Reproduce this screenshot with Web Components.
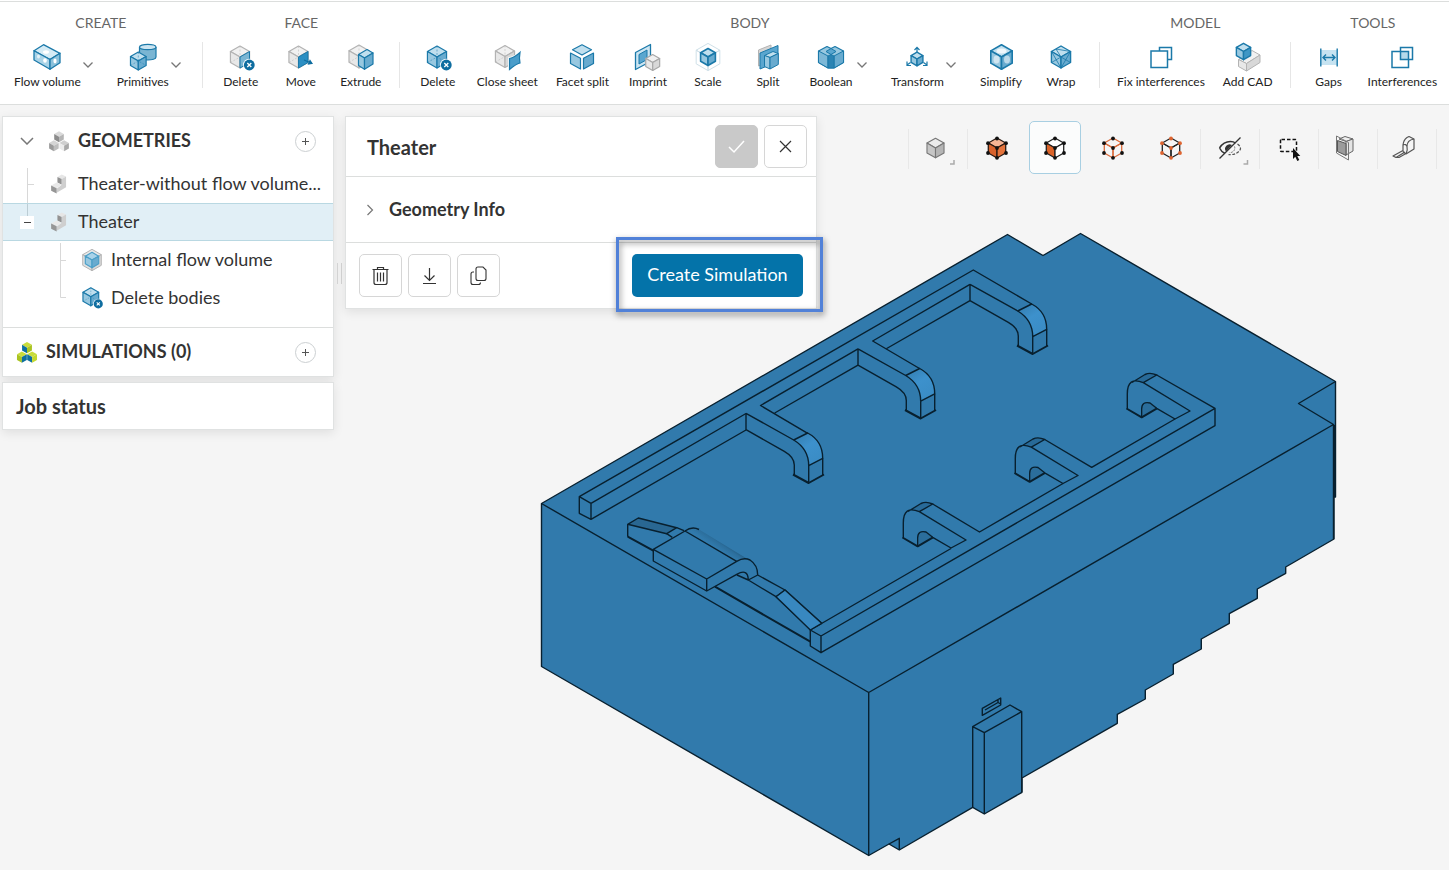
<!DOCTYPE html>
<html lang="en">
<head>
<meta charset="utf-8">
<meta name="viewport" content="width=device-width, initial-scale=1">
<title>CAD mode - Theater</title>
<style>
  html, body { margin: 0; height: 100%; }
  body { font-family: Lato, "Liberation Sans", sans-serif; color: #333; background: #f5f5f5; overflow: hidden; }
</style>
</head>
<body>
<cad-app></cad-app>

<template id="t-app">
  <style>
    :host { display: flex; flex-direction: column; min-height: 100vh; }
    main { flex: 1; position: relative; display: flex; }
    model-view { position: absolute; inset: 0; }
    .overlay { position: relative; flex: 1; display: flex; align-items: flex-start; padding: 11px 12px 0 2px; min-width: 0; }
    side-bar { flex: none; width: 332px; }
    .handle { flex: none; width: 5px; height: 21px; margin: 147px 3px 0; border: solid #d4d4d4; border-width: 0 1px; box-sizing: border-box; }
    settings-panel { flex: none; width: 472px; }
    view-tools { margin: 5px 0 0 auto; flex: none; }
  </style>
  <cad-toolbar>
    <tool-group label="CREATE">
      <tool-item icon="flow" label="Flow volume" menu></tool-item>
      <tool-item icon="primitives" label="Primitives" menu></tool-item>
    </tool-group>
    <tool-group label="FACE">
      <tool-item icon="faceDelete" label="Delete"></tool-item>
      <tool-item icon="faceMove" label="Move"></tool-item>
      <tool-item icon="extrude" label="Extrude"></tool-item>
    </tool-group>
    <tool-group label="BODY">
      <tool-item icon="bodyDelete" label="Delete"></tool-item>
      <tool-item icon="closeSheet" label="Close sheet"></tool-item>
      <tool-item icon="facet" label="Facet split"></tool-item>
      <tool-item icon="imprint" label="Imprint"></tool-item>
      <tool-item icon="scale" label="Scale"></tool-item>
      <tool-item icon="split" label="Split"></tool-item>
      <tool-item icon="boolean" label="Boolean" menu></tool-item>
      <tool-item icon="transform" label="Transform" menu></tool-item>
      <tool-item icon="simplify" label="Simplify"></tool-item>
      <tool-item icon="wrap" label="Wrap"></tool-item>
    </tool-group>
    <tool-group label="MODEL">
      <tool-item icon="fixInterf" label="Fix interferences"></tool-item>
      <tool-item icon="addCad" label="Add CAD"></tool-item>
    </tool-group>
    <tool-group label="TOOLS">
      <tool-item icon="gaps" label="Gaps"></tool-item>
      <tool-item icon="interf" label="Interferences"></tool-item>
    </tool-group>
  </cad-toolbar>
  <main>
    <model-view></model-view>
    <div class="overlay">
      <side-bar></side-bar>
      <div class="handle"></div>
      <settings-panel heading="Theater"></settings-panel>
      <view-tools></view-tools>
    </div>
  </main>
</template>

<template id="t-toolbar">
  <style>
    :host { display: flex; flex: none; box-sizing: border-box; height: 105px; padding-left: 1px; background: #fff; border-bottom: 1px solid #dcdedd; overflow: hidden; position: relative; }
    :host::before { content: ""; position: absolute; left: 0; right: 0; top: 1px; height: 1px; background: #dcdedd; }
    ::slotted(tool-group:first-child) { padding-left: 4px; padding-right: 6px; }
    ::slotted(tool-group:last-child) { --rule: transparent; }
  </style>
  <slot></slot>
</template>

<template id="t-group">
  <style>
    :host { display: flex; flex-direction: column; flex: none; gap: 13px; padding: 14px 8px 0; position: relative; }
    :host::after { content: ""; position: absolute; right: 0; top: 42px; height: 46px; width: 1px; background: var(--rule, #e6e6e6); }
    h2 { margin: 0; font-size: 14px; line-height: 17px; font-weight: 400; text-align: center; color: #666; }
    .items { display: flex; margin-right: 1px; }
  </style>
  <h2></h2>
  <div class="items"><slot></slot></div>
</template>

<template id="t-item">
  <style>
    :host { display: flex; flex: none; }
    button { font: inherit; border: 0; background: none; padding: 0; margin: 0; color: #222; cursor: pointer; }
    .main { box-sizing: border-box; min-width: 60px; padding: 0 9px; display: flex; flex-direction: column; align-items: center; gap: 2px; font-size: 12px; line-height: 16px; white-space: nowrap; }
    .chev { display: none; width: 10px; margin: 0 15px 0 2px; height: 42px; color: #777; }
    :host([menu]) .main { padding-right: 0; min-width: 57px; }
    :host([menu]) .chev { display: block; }
    .chev svg { display: block; }
    cad-icon { width: 28px; height: 28px; }
  </style>
  <button class="main" type="button"><cad-icon></cad-icon><span></span></button>
  <button class="chev" type="button" aria-label="More options"><svg width="10" height="6" viewBox="0 0 10 6"><path d="M.5.5 5 5 9.500.5" fill="none" stroke="currentColor" stroke-width="1.3"/></svg></button>
</template>

<template id="t-side">
  <style>
    :host { display: flex; flex-direction: column; gap: 5px; font-size: 18px; line-height: 24px; }
    section { background: #fff; border: 1px solid #e0e2e2; box-shadow: 0 3px 10px rgba(0,0,0,.09); box-sizing: border-box; }
    button { font: inherit; color: #555; cursor: pointer; padding: 0; }
    h2 { margin: 0; font-size: 18px; font-weight: 700; flex: 1; }
    .head h2, .row span { padding-bottom: 2px; }
    .head { display: flex; align-items: center; height: 48px; padding: 0 17px; gap: 8px; box-sizing: border-box; }
    .toggle { width: 14px; height: 14px; border: 0; background: none; margin-right: 6px; display: flex; align-items: center; color: #777; }
    .add { width: 21px; height: 21px; box-sizing: border-box; border: 1px solid #ccd0d2; border-radius: 50%; background: #fff; display: grid; place-items: center; }
    .head cad-icon, .row cad-icon { width: 22px; height: 22px; flex: none; }
    .sims { border-top: 1px solid #dcdedd; height: 49px; padding-left: 13px; gap: 8px; }
    ul { list-style: none; margin: 0; padding: 0; }
    .tree { padding-bottom: 10px; }
    .row { display: flex; align-items: center; height: 38px; box-sizing: border-box; padding: 0 17px; gap: 8px; white-space: nowrap; }
    .row svg { flex: none; margin-right: 6px; display: block; }
    .sub .row { padding-left: 50px; }
    .row.on { background: #e1eff6; border: solid #b9d8e2; border-width: 1px 0; }
    .job { height: 48px; display: flex; align-items: center; padding-left: 13px; }
    .job h2 { font-size: 20px; }
    .expander { position: relative; border: 0; background: none; width: 14px; height: 36px; margin-right: 6px; }
    .expander svg { margin: 0; }
  </style>
  <section>
    <div class="head">
      <button class="toggle" type="button" aria-label="Collapse geometries"><svg width="14" height="8" viewBox="0 0 14 8"><path d="M1 1l6 6 6-6" fill="none" stroke="currentColor" stroke-width="1.500"/></svg></button>
      <cad-icon name="cubesGrey"></cad-icon>
      <h2>GEOMETRIES</h2>
      <button class="add" type="button" aria-label="Add geometry"><svg width="7" height="7" viewBox="0 0 7 7"><path d="M3.500 0v7M0 3.500h7" stroke="currentColor" stroke-width="1"/></svg></button>
    </div>
    <ul class="tree">
      <li class="row"><svg width="14" height="38"><path d="M7.500 3v35M8 19.500h6" stroke="#d8d8d8" fill="none"/></svg><cad-icon name="part"></cad-icon><span>Theater-without flow volume...</span></li>
      <li>
        <div class="row on"><button class="expander" type="button" aria-label="Collapse Theater"><svg width="14" height="36"><path d="M7.500 0v12" stroke="#bccdd4"/><rect x="0" y="12" width="14" height="13" fill="#fff"/><path d="M4 18.500h7" stroke="#444"/></svg></button><cad-icon name="part"></cad-icon><span>Theater</span></div>
        <ul class="sub">
          <li class="row"><svg width="14" height="38"><path d="M7.500 2v36M8 19.500h5" stroke="#d8d8d8" fill="none"/></svg><cad-icon name="innerFlow"></cad-icon><span>Internal flow volume</span></li>
          <li class="row"><svg width="14" height="38"><path d="M7.500 0v18.500H13" stroke="#d8d8d8" fill="none"/></svg><cad-icon name="bodiesDelete"></cad-icon><span>Delete bodies</span></li>
        </ul>
      </li>
    </ul>
    <div class="head sims">
      <cad-icon name="cubesColor"></cad-icon>
      <h2>SIMULATIONS (0)</h2>
      <button class="add" type="button" aria-label="Add simulation"><svg width="7" height="7" viewBox="0 0 7 7"><path d="M3.500 0v7M0 3.500h7" stroke="currentColor" stroke-width="1"/></svg></button>
    </div>
  </section>
  <section class="job"><h2>Job status</h2></section>
</template>

<template id="t-panel">
  <style>
    :host { display: block; box-sizing: border-box; background: #fff; border: 1px solid #e0e2e2; box-shadow: 0 3px 10px rgba(0,0,0,.09); }
    header, .info, footer { display: flex; align-items: center; box-sizing: border-box; }
    header { height: 60px; padding: 0 9px 0 21px; gap: 6px; border-bottom: 1px solid #dcdedd; }
    h1 { margin: 0; flex: 1; font-size: 20px; line-height: 24px; font-weight: 700; }
    button { font: inherit; cursor: pointer; }
    .sq { width: 43px; height: 43px; padding: 0; display: grid; place-items: center; background: #fff; border: 1px solid #d6d6d6; border-radius: 5px; color: #333; }
    .sq:disabled { background: #c9c9c9; border-color: #c9c9c9; color: #fff; }
    .info { width: 100%; height: 66px; padding: 0 20px; gap: 15px; border: 0; border-bottom: 1px solid #dcdedd; background: none; font-size: 18px; line-height: 24px; font-weight: 700; color: #333; text-align: left; }
    .info span { padding-bottom: 2px; }
    footer { height: 65px; padding: 0 13px; gap: 6px; }
    .cta { position: relative; margin-left: auto; }
    .cta button { height: 43px; width: 171px; padding: 0 0 3px; border: 0; border-radius: 5px; background: #0473a9; color: #fff; font-size: 18px; line-height: 24px; display: block; white-space: nowrap; }
    .cta::after { content: ""; position: absolute; inset: -17px -20px -15px -16px; border: 3px solid #5181d8; filter: drop-shadow(1px 3px 3px rgba(0,0,0,.5)); pointer-events: none; }
  </style>
  <header>
    <h1></h1>
    <button class="sq" type="button" disabled aria-label="Apply"><svg width="17" height="14" viewBox="0 0 17 14"><path d="M1 7l5 5L16 1" fill="none" stroke="currentColor" stroke-width="1.500"/></svg></button>
    <button class="sq" type="button" aria-label="Close"><svg width="13" height="13" viewBox="0 0 13 13"><path d="M1 1l11 11M12 1l-11 11" fill="none" stroke="currentColor" stroke-width="1.200"/></svg></button>
  </header>
  <button class="info" type="button" aria-expanded="false"><svg width="8" height="12" viewBox="0 0 8 12"><path d="M1.500 1l5 5-5 5" fill="none" stroke="#777" stroke-width="1.200"/></svg><span>Geometry Info</span></button>
  <footer>
    <button class="sq" type="button" aria-label="Delete"><svg width="17" height="20" viewBox="0 0 17 20" fill="none" stroke="currentColor" stroke-width="1.200"><path d="M.5 3.500h16M5.500 3.500V1.500h6v2M2 3.500V16.500q0 2 2 2h9q2 0 2-2V3.500M5.500 6.500v9M8.500 6.500v9M11.500 6.500v9"/></svg></button>
    <button class="sq" type="button" aria-label="Download"><svg width="15" height="18" viewBox="0 0 15 18" fill="none" stroke="currentColor" stroke-width="1.200"><path d="M7.500 1v12M2.500 8.500l5 5 5-5M1 16.500h13"/></svg></button>
    <button class="sq" type="button" aria-label="Duplicate"><svg width="17" height="20" viewBox="0 0 17 20" fill="none" stroke="currentColor" stroke-width="1.100"><path d="M6 3q0-2 2-2h5l3 3v8.500q0 2-2 2H8q-2 0-2-2zM4 6H3q-2 0-2 2v8.500q0 2 2 2h5.500q2 0 2-2"/></svg></button>
    <div class="cta"><button type="button">Create Simulation</button></div>
  </footer>
</template>

<template id="t-view">
  <style>
    :host { display: flex; }
    .g { display: flex; gap: 6px; padding: 0 3px; position: relative; border-right: 1px solid transparent; }
    .g::after, .g:first-of-type::before { content: ""; position: absolute; top: 8px; height: 40px; width: 1px; background: #e8e8e8; }
    .g::after { right: -1px; }
    .g:first-of-type { border-left: 1px solid transparent; }
    .g:first-of-type::before { left: -1px; }
    button { box-sizing: border-box; width: 52px; height: 53px; padding: 0; border: 1px solid transparent; border-radius: 5px; background: none; cursor: pointer; display: grid; place-items: center; }
    button[aria-pressed=true] { background: #fbfcfc; border-color: #a8cfe2; }
    cad-icon { width: 40px; height: 40px; }
  </style>
  <div class="g"><button type="button" aria-label="Render mode"><cad-icon name="vCube" box="40"></cad-icon></button></div>
  <div class="g">
    <button type="button" aria-label="Pick volumes"><cad-icon name="vVolume" box="40"></cad-icon></button>
    <button type="button" aria-label="Pick faces" aria-pressed="true"><cad-icon name="vFace" box="40"></cad-icon></button>
    <button type="button" aria-label="Pick edges"><cad-icon name="vEdge" box="40"></cad-icon></button>
    <button type="button" aria-label="Pick vertices"><cad-icon name="vNode" box="40"></cad-icon></button>
  </div>
  <div class="g"><button type="button" aria-label="Visibility"><cad-icon name="vHide" box="40"></cad-icon></button></div>
  <div class="g"><button type="button" aria-label="Box selection"><cad-icon name="vSelect" box="40"></cad-icon></button></div>
  <div class="g"><button type="button" aria-label="Clip"><cad-icon name="vClip" box="40"></cad-icon></button></div>
  <div class="g"><button type="button" aria-label="Measure"><cad-icon name="vTape" box="40"></cad-icon></button></div>
</template>

<template id="t-model">
  <style>
    :host { display: block; overflow: hidden; }
    svg { display: block; width: 100%; height: 100%; }
  </style>
  <svg viewBox="0 105 1449 765" fill="none" stroke="#08202f" stroke-width="1.400" stroke-linejoin="round" role="img" aria-label="Theater model">
    <defs>
      <linearGradient id="bend" x1="0" y1="0" x2=".6" y2="1"><stop offset="0" stop-color="#327bad"/><stop offset=".5" stop-color="#3d91cc"/><stop offset="1" stop-color="#3a8cc5"/></linearGradient>
      <linearGradient id="roll" gradientUnits="userSpaceOnUse" x1="718" y1="549" x2="724" y2="540"><stop offset="0" stop-color="#317aac"/><stop offset=".5" stop-color="#2c6f9d"/><stop offset="1" stop-color="#1f5274"/></linearGradient>
      <g id="drop">
        <path d="M1017.700 311 1031.700 304Q1046.700 312 1046.700 329.300L1032.700 336.700Q1032.700 320 1017.700 311Z" fill="url(#bend)"/>
        <path d="M970 284.300V300.700L1008.300 322.300Q1018.300 328 1018.300 336V346M970 284.300 1017.700 311M1032.700 336.700V354M1046.700 329.300V346"/>
        <path d="M1017 345.500 1032.700 354 1048 345.500" stroke-width="2"/>
      </g>
      <g id="hook">
        <path d="M1135 381 1148 373.500Q1152 373 1156.700 375L1143.300 382.700Z" fill="#286a98" stroke="none"/>
        <path d="M1143 407Q1143.500 402 1149 403L1156 408 1143 416Z" fill="#2b6e9c" stroke="none"/>
        <path d="M1127.300 409V394Q1127.300 376 1143.300 382.700L1190 411 1175 419 1156.700 408.300 1150 403Q1141.700 401 1141.700 409V417.300M1132 382.500 1145 374.500Q1150 372 1156.700 375L1143.300 382.700"/>
        <path d="M1126.500 408.500 1141.700 417.300 1157 408.300" stroke-width="2"/>
      </g>
    </defs>
    <path fill="#317aac" d="M541.500 503.500 1007.500 234.500 1043 255.500 1080.500 233.500 1335.500 381.500V497H1334V539L1285.700 567V573.300L1257.300 589V598.300L1229.300 613.700V623.300L1201.300 639V649L1173.300 664.300V674L1145.300 690V699L1117.300 714.300V723.300L1022 778V792.300L984.300 814 972.700 807.300 899.300 850 889 844 868.700 855.500 541.500 666.500Z"/>
    <path d="M541.500 503.500 868.700 692.500 1333.500 424.500 1298.500 403.500 1335.500 381.500M868.700 692.500V855.500M1333.500 424V539M889 844 899.300 838.300V850"/>
    <path d="M1334.800 425V497" stroke-width="2.400"/>
    <path d="M972.700 808V726.700L1010 705 1021.700 711.700V792M972.700 726.700 984.300 732.700 1021.700 711.700M984.300 732.700V814"/>
    <path d="M982.300 715.300V708.300L1000.700 698V705ZM985 710 998 702.500 1000.700 704M998 702.500V699.500"/>
    <path d="M591 519.300 579.300 513.300V496.700L973.300 270 1031.700 304M579.300 496.700 591 503.300V519.300L746 430M591 503.300 746 413.500"/>
    <path d="M970 284.300 872.700 341 919.500 368.500M970 300.700 886.700 348.500M858 348.800 760.500 405.500 807.700 433.300M858 365.200 774.700 413"/>
    <use href="#drop"/><use href="#drop" x="-112" y="64.500"/><use href="#drop" x="-224" y="129"/>
    <use href="#hook"/><use href="#hook" x="-112" y="64.500"/><use href="#hook" x="-224" y="129"/>
    <path d="M1156.700 375 1215 408.300V425.700L821 652.700 810.300 646V630L951 548.500M1215 408.300 821 636V652.700M821 636 810.300 630M1175 419 1091.700 467.300 1044.700 439.500M1063 483.500 979.500 532 932.700 504"/>
    <path d="M627.700 524.300 638.300 518 676.700 527.700 666.700 533.700Z" fill="#296792"/>
    <path d="M666.700 533.700 672.300 537.300M676.700 527.700 684 530.700M627.700 524.300V536.700"/>
    <path d="M627.700 536.700 653.300 550.700M715 586.700 810.300 641.700" stroke-width="2"/>
    <path d="M685 531Q692 526 699 529.500L746.700 558.500Q741 558 736.700 561.300Z" fill="url(#roll)" stroke="none"/>
    <path d="M653.300 549.300 685 531 736.700 561.300 706.700 579ZM653.300 549.300V561L706.700 591V579M685 531Q692 526 699 529.500M736.700 561.300Q744 557 750 560 757.700 565 757.700 575L785 590 821.700 623.300M706.700 591 736.700 574.300Q748 568 748.300 580L776 596.700 810.300 629M748.300 580 757.700 575M776 596.700 785 590M737 575 748.300 580"/>
    <path d="M776 596.700 785 590 821.700 623.300 810.300 630Z" fill="#3888c0"/>
  </svg>
</template>

<script>
const BLUE = { t: '#c0dfee', l: '#98c8e0', r: '#69abcf', s: '#1b79a9' };
const GREY = { t: '#f1f1f1', l: '#e8e8e8', r: '#d8d8d8', s: '#b3b3b3' };

const poly = (pts, fill, stroke = 'none', w = 1) =>
  `<polygon points="${pts}" fill="${fill}" stroke="${stroke}" stroke-width="${w}" stroke-linejoin="round"/>`;

/* Isometric cube around (cx, cy) with corner radius r. */
function cube(cx, cy, r, c, w = 1.2) {
  const x = r * 0.87, h = r / 2;
  return poly([cx, cy - r, cx + x, cy - h, cx, cy, cx - x, cy - h], c.t, c.s, w)
    + poly([cx - x, cy - h, cx, cy, cx, cy + r, cx - x, cy + h], c.l, c.s, w)
    + poly([cx + x, cy - h, cx, cy, cx, cy + r, cx + x, cy + h], c.r, c.s, w);
}
const hidden = (cx, cy, r, s) =>
  `<path d="M${cx} ${cy - r}V${cy}M${cx - r * .87} ${cy + r / 2}L${cx} ${cy}L${cx + r * .87} ${cy + r / 2}" fill="none" stroke="${s}" stroke-width=".7" stroke-dasharray="2 1.500" opacity=".7"/>`;
const cross = (x, y, r) => `<circle cx="${x}" cy="${y}" r="${r + .8}" fill="#fff"/><circle cx="${x}" cy="${y}" r="${r}" fill="#0e6da0"/><path d="M${x - 2} ${y - 2}l4 4m0-4l-4 4" stroke="#fff" stroke-width="1.300"/>`;
const badge = cross(22.3, 21, 5.4);
const solid = (a, b, c) => ({ t: a, l: b, r: c, s: 'none' });

function nodes(faces, edge, dot) {
  const p = [[20, 10.5], [29, 15.2], [29, 25], [20, 29.8], [11, 25], [11, 15.2], [20, 20]];
  return cube(20, 20, 10, { ...faces, s: edge }, 1.3)
    + p.map(([x, y]) => `<circle cx="${x}" cy="${y}" r="1.900" fill="${dot}"/>`).join('');
}

const ICONS = {
  flow: poly('1,6.700 10.500,.7 27,9.300 17,15.500', '#d5ebf5', BLUE.s, 1.3) + poly('1,6.700 17,15.500 17,25.300 1,16', '#a9d3e7', BLUE.s, 1.3) + poly('17,15.500 27,9.300 27,18.700 17,25.300', '#8bc1db', BLUE.s, 1.3)
    + '<ellipse cx="13" cy="8" rx="3" ry="1.800" fill="#fff"/><ellipse cx="12" cy="16.500" rx="1.800" ry="2.200" fill="#fff"/><ellipse cx="5.500" cy="12.500" rx="1.500" ry="2" fill="#fff" opacity=".7"/><ellipse cx="22" cy="17" rx="1.600" ry="2.400" fill="#fff"/>',
  primitives: '<path d="M10.500 3v10c0 4 16.500 4 16.500 0V3" fill="#7ab5d3" stroke="#1b79a9" stroke-width="1.200"/><ellipse cx="18.750" cy="3" rx="8.250" ry="2.600" fill="#cbe5f2" stroke="#1b79a9" stroke-width="1.200"/>' + cube(9.3, 17, 9, BLUE) + hidden(9.3, 17, 9, BLUE.s),
  faceDelete: cube(13, 13, 11, { ...GREY, r: '#8fc3dd' }) + hidden(13, 13, 11, GREY.s) + poly('13,13 22.500,7.500 22.500,18.500 13,24', '#7ab5d3', BLUE.s) + badge,
  faceMove: cube(11.5, 13, 11, GREY) + hidden(11.5, 13, 11, GREY.s) + poly('11.500,13 21,7.500 21,18.500 11.500,24', '#2c8fc3', BLUE.s) + '<path d="M17 16l7 3M25 19.500l-3.500.5 1.500-3.500z" stroke="#0e6da0" fill="#0e6da0" stroke-width="1.200"/>',
  extrude: cube(12, 12.5, 11.5, GREY) + hidden(12, 12.5, 11.5, GREY.s) + poly('11.500,10.500 20,5.500 26,9 17.500,14', BLUE.t, BLUE.s, 1.2) + poly('11.500,10.500 17.500,14 17.500,25.300 11.500,21.500', BLUE.l, BLUE.s, 1.2) + poly('17.500,14 26,9 26,20 17.500,25.300', BLUE.r, BLUE.s, 1.2),
  bodyDelete: cube(13, 13, 11, BLUE) + hidden(13, 13, 11, BLUE.s) + badge,
  bodiesDelete: cube(12.5, 12.5, 11.5, BLUE, 1.5) + hidden(12.5, 12.5, 11.5, BLUE.s) + cross(22, 21.5, 5.8),
  closeSheet: cube(12, 12.5, 11, GREY) + hidden(12, 12.5, 11, GREY.s) + '<path d="M15 13.500q6-1 12-6v12q-4 1-12 6.500z" fill="#fff"/><path d="M16.500 14.500q5-1 10.500-6-1 5 0 10.500-4 1-10.500 6.500z" fill="#4a9dca" stroke="#1b79a9" stroke-width="1.200"/>',
  facet: poly('14,.8 23.500,5.800 14,11 4.500,5.800', BLUE.t, BLUE.s, 1.2) + poly('2.500,9 12.500,14.300 12.500,25 2.500,19.500', BLUE.l, BLUE.s, 1.2) + poly('25.500,9 15.500,14.300 15.500,25 25.500,19.500', BLUE.r, BLUE.s, 1.2),
  imprint: poly('1.500,8.500 16.500,.5 16.500,17.500 1.500,25.500', '#cbe5f2', BLUE.s, 1.3) + poly('5,10.500 13,6 13,15.500 5,20', '#5aa6cf', BLUE.s) + cube(18.700, 18.5, 8, { ...GREY, s: '#a8a8a8' }),
  scale: cube(14, 13, 13.6, { t: 'none', l: 'none', r: 'none', s: '#cfe0e8' }, 1) + cube(14, 13, 8.5, BLUE, 1.6),
  split: poly('4.500,6 17,1 17,17 4.500,22', '#d5d5d5', '#b3b3b3') + poly('6,9 24,1.500 24,17.500 6,25', '#5aa6cf', BLUE.s) + poly('10.500,11.500 19,7.500 24.300,9.500 16,13.500', BLUE.t, BLUE.s) + poly('10.500,11.500 16,13.500 16,25 10.500,22.500', BLUE.l, BLUE.s) + poly('16,13.500 24.300,9.500 24.300,20.500 16,25', BLUE.r, BLUE.s),
  boolean: poly('1.500,7 10,2.500 14,4.500 18,2.500 26.500,7 26.500,18.500 17,24 11,24 1.500,18.500', '#98c8e0', BLUE.s, 1.2) + poly('17,12 26.500,7 26.500,18.500 17,24', '#69abcf', BLUE.s) + poly('1.500,7 11,12 11,24 1.500,18.500', '#7db8d7', BLUE.s) + poly('14,4.500 19,7.500 14,10.500 9,7.500', '#5aa6cf', BLUE.s) + poly('11,12 14,10.500 17,12 17,24 11,24', '#2a83b3', BLUE.s),
  transform: cube(14, 15, 6.8, BLUE, 1.4) + '<path d="M14 8V3.500M11.500 6L14 3.300 16.500 6M7.500 18.500L4 21M4 17.500v4h4M20.500 18.500L24 21M24 17.500v4h-4" fill="none" stroke="#1b79a9" stroke-width="1.200"/>',
  simplify: cube(14.500, 13, 12.3, BLUE, 1.6) + '<ellipse cx="14.500" cy="7" rx="5" ry="2.500" fill="#fff" opacity=".75"/><ellipse cx="9.500" cy="15.500" rx="3" ry="4" fill="#fff" opacity=".55"/><ellipse cx="20" cy="15.500" rx="3" ry="4" fill="#fff" opacity=".55"/>',
  wrap: cube(14, 13, 11, BLUE, 1.4) + '<path d="M4.500 7.500L14 24M14 13L4.500 18.500M23.500 7.500L14 24M14 13l9.500 5.500M9 5l14.500 2.500M9 5l5 8" fill="none" stroke="#1b79a9" stroke-width=".8"/>',
  fixInterf: '<path d="M12.500 7V3.500h12v12H21" fill="none" stroke="#1b79a9" stroke-width="1.500"/><rect x="4" y="7" width="16.500" height="16.500" fill="#fff" stroke="#1b79a9" stroke-width="1.500"/>',
  addCad: poly('4.500,15.500 18,6.500 26,11 12.500,19.500', GREY.t, GREY.s) + poly('4.500,15.500 12.500,19.500 12.500,27 4.500,22.500', GREY.l, GREY.s) + poly('12.500,19.500 26,11 26,18.500 12.500,27', GREY.r, GREY.s) + cube(9.5, 7.5, 8.2, { ...BLUE, r: '#3f97c5' }, 1.4),
  gaps: '<rect x="5.500" y="6" width="17" height="15" fill="#c6e3f1"/><path d="M5.800 4.500v18M22.200 4.500v18M8.500 13.500h11M11 10.500l-3 3 3 3M17 10.500l3 3-3 3" fill="none" stroke="#1b79a9" stroke-width="1.400"/>',
  interf: '<rect x="12.500" y="7.500" width="8" height="8" fill="#b5daeb"/><path d="M12.500 3.500h12v12h-12zM4 7.500h16.500v16H4z" fill="none" stroke="#1b79a9" stroke-width="1.500"/>',
  cubesGrey: cube(14, 8.5, 7, solid('#dadada', '#8c8c8c', '#b5b5b5')) + cube(7.5, 20, 7, solid('#d5d5d5', '#9a9a9a', '#bebebe')) + cube(20.5, 20, 7, solid('#cfcfcf', '#ececec', '#a9a9a9')),
  cubesColor: cube(14, 8.500, 7.2, solid('#c9dc3c', '#0d6f9f', '#a9c321')) + cube(7.5, 20.500, 7.2, solid('#c9dc3c', '#a9c321', '#0d6f9f')) + cube(20.5, 20.500, 7.2, solid('#c9dc3c', '#0d6f9f', '#c3d82e')),
  part: poly('12,5 17.500,2 23,4.500 17.500,7.500', '#e6e6e6') + poly('12,5 17.500,7.500 17.500,15 12,12', '#929292') + poly('17.500,7.500 23,4.500 23,18 11,25 11,20 17.500,15', '#cfcfcf') + poly('4,16 11,12 17.500,15 11,19.500', '#e9e9e9') + poly('4,16 11,19.500 11,26 4,22.500', '#969696'),
  innerFlow: cube(14, 14, 13.6, { t: '#e8e8e8', l: '#e2e2e2', r: '#d9d9d9', s: '#b0b0b0' }, 1.2) + cube(14, 14, 9.8, { ...BLUE, t: '#a9d3e9', s: '#4b9fc8' }, 1.5),
  vCube: cube(17.5, 20, 9.8, { t: '#ececec', l: '#c6c6c6', r: '#b5b5b5', s: '#777' }, 1.1) + '<path d="M36 32v4h-4" fill="none" stroke="#aaa" stroke-width="1.500"/>',
  vVolume: nodes({ t: '#f6b595', l: '#d8622c', r: '#e5733b' }, '#2b1b14', '#111'),
  vFace: nodes({ t: '#fff', l: '#db6429', r: '#fff' }, '#222', '#111'),
  vEdge: nodes({ t: 'none', l: 'none', r: 'none' }, '#db6a3a', '#111'),
  vNode: nodes({ t: 'none', l: 'none', r: 'none' }, '#222', '#de6430'),
  vHide: '<path d="M9.500 20q4-6.500 11-6.500 3 0 5 1.500M9.500 20q2 4 5.500 5.500" fill="none" stroke="#333" stroke-width="1.500"/><path d="M27.500 16q3 2 3 5-3 6-12 5.700" fill="none" stroke="#555" stroke-width="1.200" stroke-dasharray="3 1.500"/><path d="M16 23.500a4.500 4.500 0 0 1 6-6.500z" fill="#333"/><path d="M24.500 18.500a4.500 4.500 0 0 1-5 6" fill="none" stroke="#777" stroke-dasharray="2 1"/><path d="M9.500 30.500L30.500 9.500" stroke="#333" stroke-width="1.200"/><path d="M37.500 32v4h-4" fill="none" stroke="#aaa" stroke-width="1.500"/>',
  vSelect: '<rect x="11.500" y="11.500" width="16" height="12" rx="1" fill="none" stroke="#111" stroke-width="1.500" stroke-dasharray="3.500 2"/><path d="M24 20v11l2.300-2.200 2 4.200 2-1-2-4h3z" fill="#111"/>',
  vClip: poly('11,11 17,8.500 25,11 18,13.500', '#efefef', '#666') + poly('18,13.500 25,11 25,23 18,27', '#e4e4e4', '#666') + poly('9.500,12.500 18,15.500 18,27.500 9.500,23.500', '#9b9b9b', '#555') + '<path d="M8.500 8l12 6.500v17.500l-12-7z" fill="none" stroke="#777"/>',
  vTape: '<path d="M16 23.500v-6.500q.5-5 4-7.500l2-1 5 2.500v10L19 26 16 23.500M16 17q3-1.500 4 1.500 1 4-1 7.500M27 11q-7 1-7 7.500M16 22.500L6 28l3 1.500h3l7-4M9 29.500l9-5.500" fill="none" stroke="#555" stroke-width="1.200" stroke-linejoin="round"/>'
};

class Base extends HTMLElement {
  constructor(id) {
    super();
    this.attachShadow({ mode: 'open' }).append(document.getElementById(id).content.cloneNode(true));
  }
  $(sel) { return this.shadowRoot.querySelector(sel); }
}

class CadIcon extends HTMLElement {
  static observedAttributes = ['name'];
  constructor() { super(); this.attachShadow({ mode: 'open' }); }
  attributeChangedCallback() {
    const box = this.getAttribute('box') || 28;
    this.shadowRoot.innerHTML = `<style>:host{display:block}svg{display:block;width:100%;height:100%;overflow:visible}</style><svg viewBox="0 0 ${box} ${box}" aria-hidden="true">${ICONS[this.getAttribute('name')] || ''}</svg>`;
  }
  connectedCallback() { this.attributeChangedCallback(); }
}
class CadToolbar extends Base { constructor() { super('t-toolbar'); } }
class ToolGroup extends Base {
  constructor() { super('t-group'); }
  connectedCallback() { this.$('h2').textContent = this.getAttribute('label'); }
}
class ToolItem extends Base {
  constructor() { super('t-item'); }
  connectedCallback() {
    this.$('span').textContent = this.getAttribute('label');
    this.$('cad-icon').setAttribute('name', this.getAttribute('icon'));
  }
}
class SideBar extends Base { constructor() { super('t-side'); } }
class SettingsPanel extends Base {
  constructor() { super('t-panel'); }
  connectedCallback() { this.$('h1').textContent = this.getAttribute('heading'); }
}
class ViewTools extends Base { constructor() { super('t-view'); } }
class ModelView extends Base { constructor() { super('t-model'); } }
class CadApp extends Base { constructor() { super('t-app'); } }

customElements.define('cad-icon', CadIcon);
customElements.define('tool-item', ToolItem);
customElements.define('tool-group', ToolGroup);
customElements.define('cad-toolbar', CadToolbar);
customElements.define('side-bar', SideBar);
customElements.define('settings-panel', SettingsPanel);
customElements.define('view-tools', ViewTools);
customElements.define('model-view', ModelView);
customElements.define('cad-app', CadApp);
</script>
</body>
</html>
